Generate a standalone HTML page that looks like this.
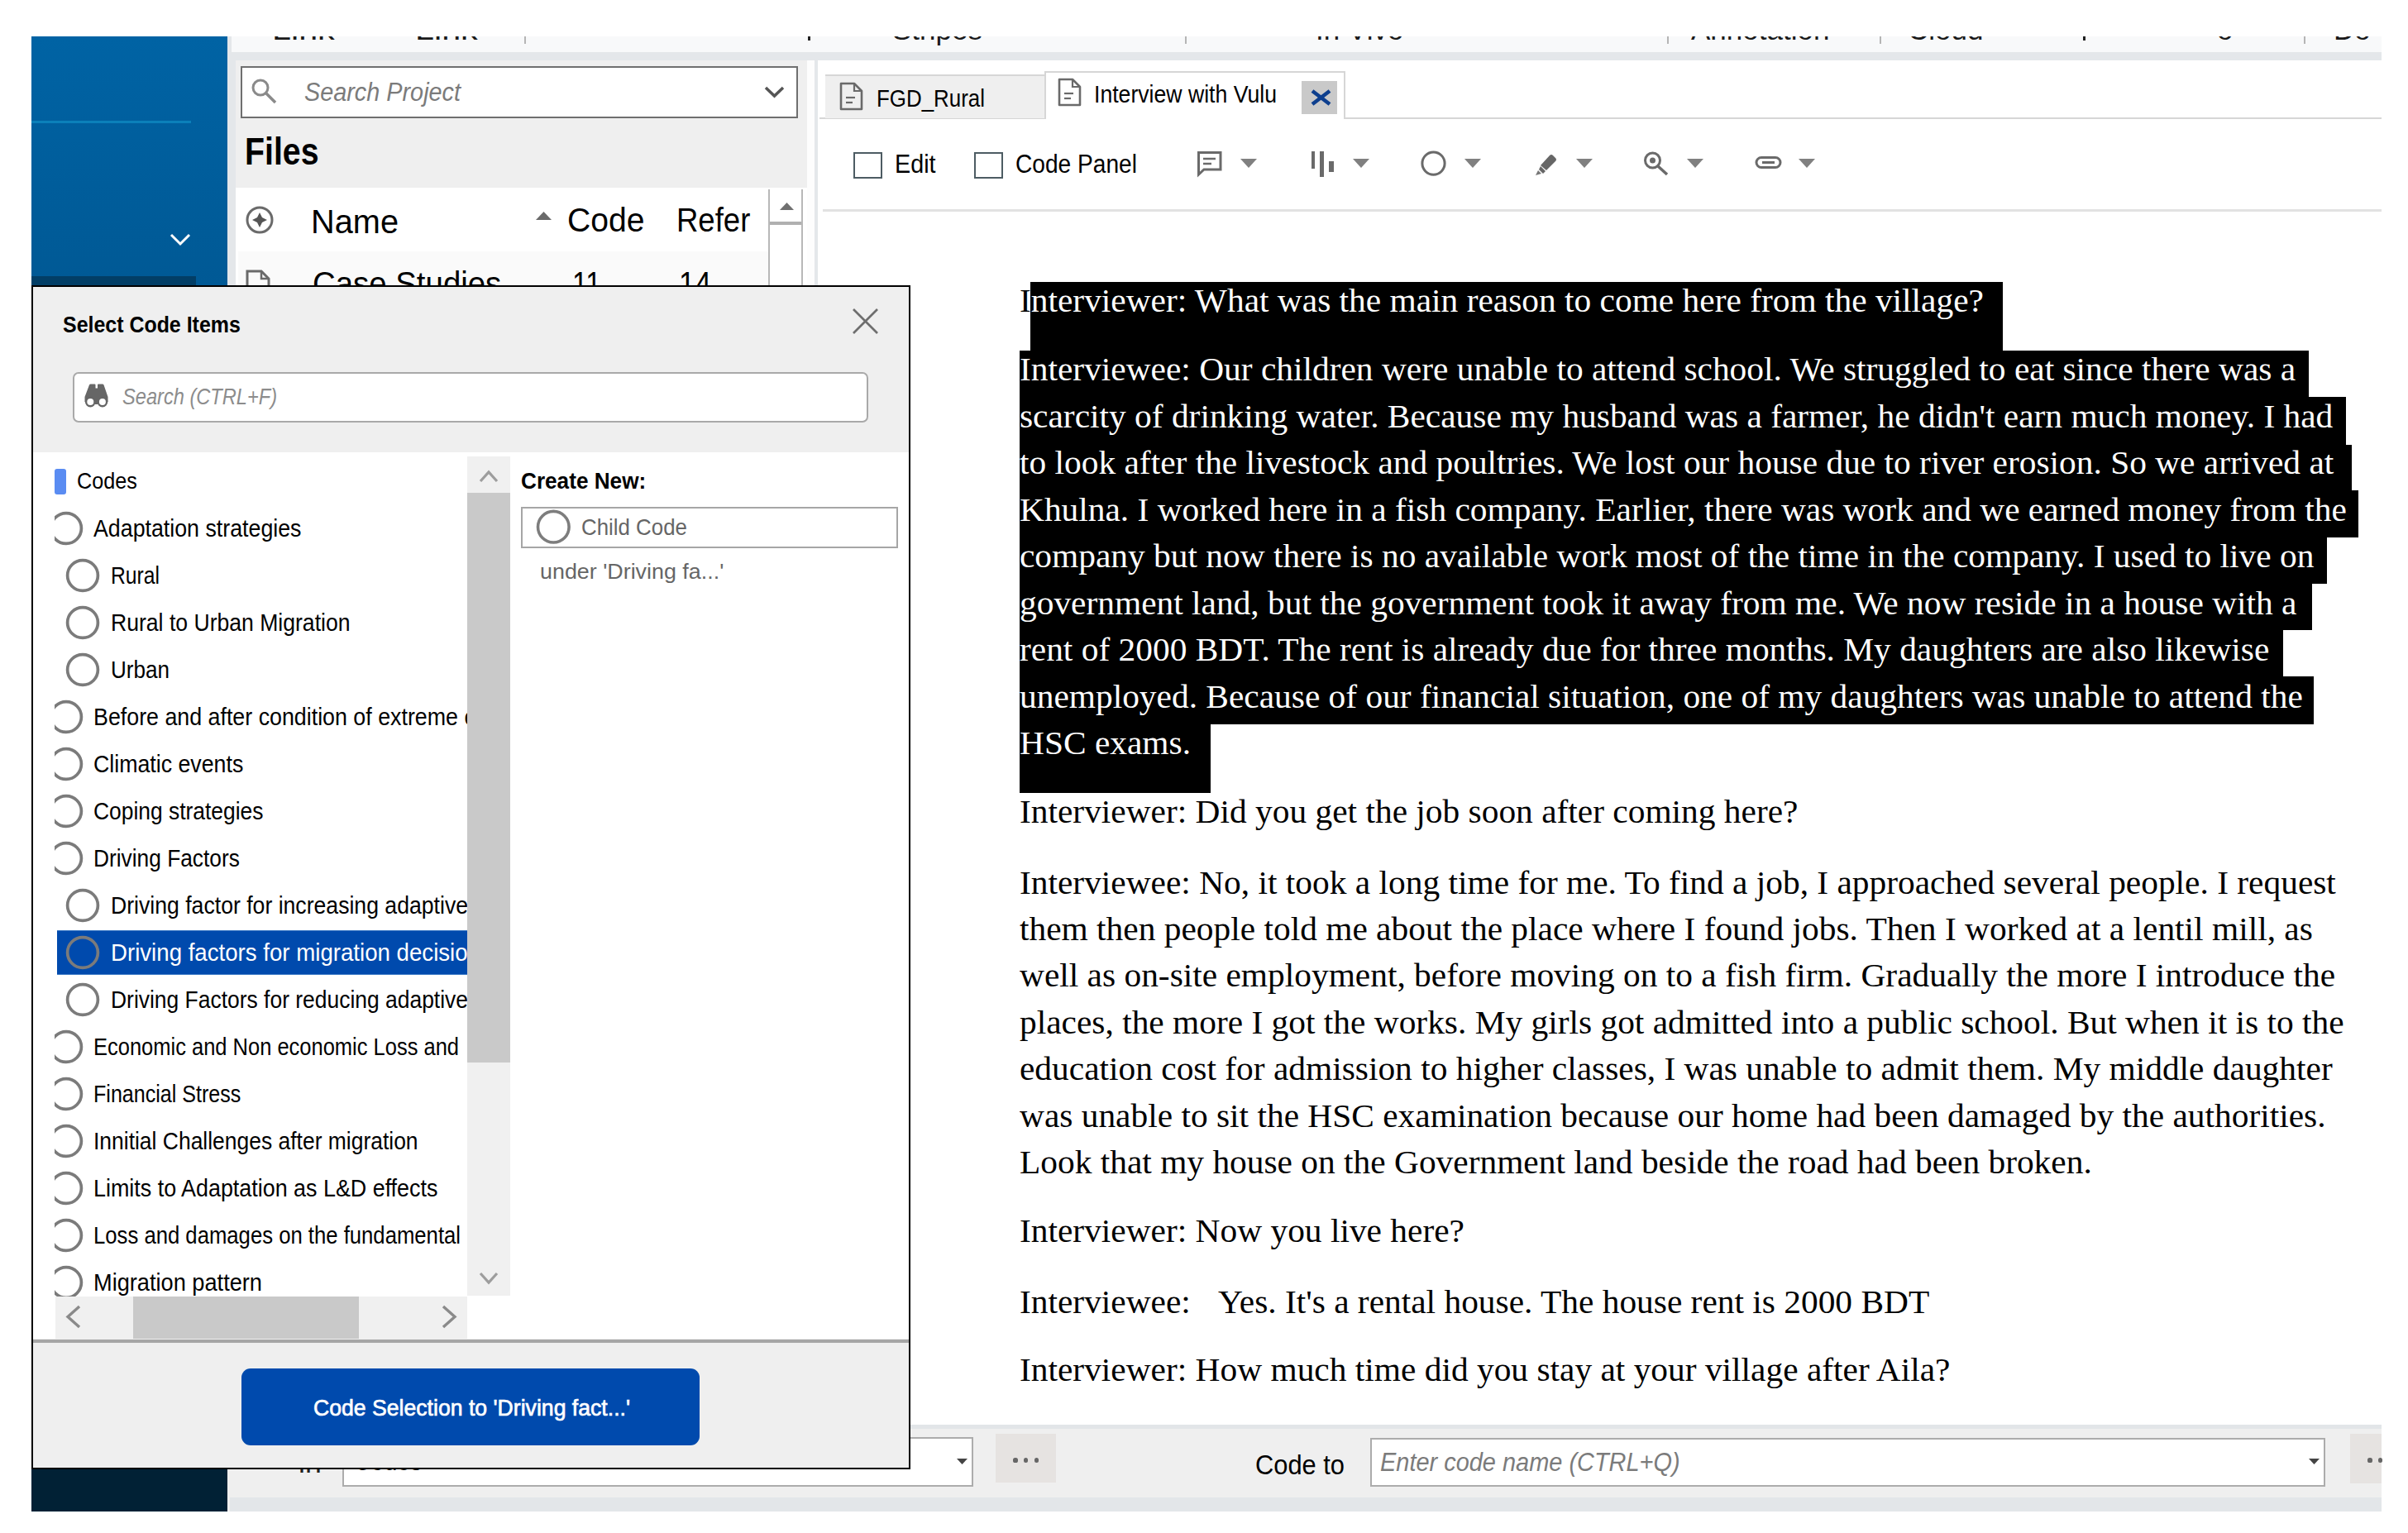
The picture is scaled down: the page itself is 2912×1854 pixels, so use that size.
<!DOCTYPE html>
<html><head><meta charset="utf-8"><style>
html,body{margin:0;padding:0;background:#fff;}
body{width:2912px;height:1854px;position:relative;overflow:hidden;}
.b{position:absolute;}
.t{position:absolute;white-space:pre;transform-origin:0 0;}
</style></head><body>
<div class='b' style='left:38px;top:44px;width:237.00px;height:1784.00px;background:linear-gradient(#0063a4 0px,#005995 300px,#005591 1000px,#012135 1730px)'></div>
<div class='b' style='left:38px;top:146px;width:193.00px;height:2.50px;background:#0b80ba'></div>
<div class='b' style='left:38px;top:334px;width:199.00px;height:11.00px;background:#023e66'></div>
<div class='b' style='left:38px;top:1777px;width:237.00px;height:51.00px;background:#012135'></div>
<svg class='b' style='left:204px;top:280px' width='28' height='20'><polyline points='3,4 14,15 25,4' fill='none' stroke='#fff' stroke-width='3'/></svg>
<div class='b' style='left:275px;top:44px;width:10.00px;height:1784.00px;background:#e4e7ea'></div>
<div class='b' style='left:280px;top:44px;width:2600.00px;height:19.00px;background:#f8f9fa'></div>
<div class='b' style='left:275px;top:63px;width:2605.00px;height:10.00px;background:#e4e7ea'></div>
<div class='b' style='left:285px;top:73px;width:691.00px;height:1650.00px;background:#efefef'></div>
<div class='b' style='left:291px;top:80px;width:674.00px;height:63.00px;background:#fff;border:2px solid #6f6f6f;box-sizing:border-box'></div>
<svg class='b' style='left:300px;top:92px' width='40' height='40'><circle cx='15' cy='14' r='9' fill='none' stroke='#8a8a8a' stroke-width='3'/><line x1='21.5' y1='20.5' x2='33' y2='32' stroke='#8a8a8a' stroke-width='3.5'/></svg>
<div class='t' style='left:367.5px;top:95.24px;font:italic normal 31px "Liberation Sans", sans-serif;line-height:1.1171875em;color:#7b7b7b;transform:scaleX(0.9295);'>Search Project</div>
<svg class='b' style='left:922px;top:100px' width='30' height='24'><polyline points='4,6 14.5,16 25,6' fill='none' stroke='#555' stroke-width='3.5'/></svg>
<div class='t' style='left:296.0px;top:158.06px;font:normal bold 46px "Liberation Sans", sans-serif;line-height:1.1171875em;color:#000;transform:scaleX(0.8538);'>Files</div>
<div class='b' style='left:285px;top:227px;width:691.00px;height:1496.00px;background:#fff'></div>
<div class='b' style='left:288px;top:304px;width:641.00px;height:41.00px;background:#fafafa'></div>
<svg class='b' style='left:295px;top:247px' width='40' height='40'><circle cx='19' cy='19' r='15' fill='none' stroke='#6a6a6a' stroke-width='3'/><path d='M19 10 L22 16 L28 19 L22 22 L19 28 L16 22 L10 19 L16 16 Z' fill='#555'/></svg>
<div class='t' style='left:376.3px;top:246.49px;font:normal normal 40px "Liberation Sans", sans-serif;line-height:1.1171875em;color:#000;transform:scaleX(0.9934);'>Name</div>
<svg class='b' style='left:646px;top:254px' width='24' height='14'><polygon points='2,12 11.5,2 21,12' fill='#6a6a6a'/></svg>
<div class='t' style='left:685.5px;top:244.09px;font:normal normal 40px "Liberation Sans", sans-serif;line-height:1.1171875em;color:#000;transform:scaleX(0.9778);'>Code</div>
<div class='t' style='left:817.7px;top:244.09px;font:normal normal 40px "Liberation Sans", sans-serif;line-height:1.1171875em;color:#000;transform:scaleX(0.9130);'>Refer</div>
<div class='b' style='left:929px;top:229px;width:42.00px;height:116.00px;background:#fff;border-left:2px solid #b8b8b8;border-right:2px solid #b8b8b8;box-sizing:border-box'></div>
<div class='b' style='left:931px;top:268px;width:38.00px;height:4.00px;background:#b0b0b0'></div>
<svg class='b' style='left:941px;top:243px' width='22' height='14'><polygon points='2,11 10.5,2 19,11' fill='#707070'/></svg>
<svg class='b' style='left:296px;top:325px' width='34' height='24'><path d='M3 22 V3 H20 L29 12 V22' fill='none' stroke='#6a6a6a' stroke-width='3'/><path d='M20 3 V12 H29' fill='none' stroke='#6a6a6a' stroke-width='2.5'/></svg>
<div class='t' style='left:377.7px;top:320.79px;font:normal normal 40px "Liberation Sans", sans-serif;line-height:1.1171875em;color:#000;transform:scaleX(0.9596);'>Case Studies</div>
<div class='t' style='left:691.5px;top:320.79px;font:normal normal 40px "Liberation Sans", sans-serif;line-height:1.1171875em;color:#000;transform:scaleX(0.8427);'>11</div>
<div class='t' style='left:821.4px;top:320.79px;font:normal normal 40px "Liberation Sans", sans-serif;line-height:1.1171875em;color:#000;transform:scaleX(0.8764);'>14</div>
<div class='b' style='left:976px;top:73px;width:9.00px;height:1650.00px;background:#fdfdfd'></div>
<div class='b' style='left:984.6px;top:73px;width:4.30px;height:1650.00px;background:#e4e7ea'></div>
<div class='b' style='left:988.9px;top:73px;width:1891.10px;height:1650.00px;background:#fff'></div>
<div class='b' style='left:991px;top:142px;width:1889.00px;height:2.00px;background:#d6d6d6'></div>
<div class='b' style='left:998px;top:90px;width:265.00px;height:53.00px;background:#efefef;border-top:2px solid #d6d6d6;box-sizing:border-box'></div>
<div class='b' style='left:1263px;top:86px;width:364.00px;height:58.00px;background:#fff;border:2px solid #d6d6d6;border-bottom:none;box-sizing:border-box'></div>
<svg class='b' style='left:1014px;top:99px' width='32' height='36'><path d='M3 2 H19 L28 11 V33 H3 Z' fill='none' stroke='#6a6a6a' stroke-width='2.6' stroke-linejoin='round'/><path d='M19 2 V11 H28' fill='none' stroke='#6a6a6a' stroke-width='2.2'/><line x1='9' y1='19' x2='20' y2='19' stroke='#6a6a6a' stroke-width='2.2'/><line x1='9' y1='25' x2='17' y2='25' stroke='#6a6a6a' stroke-width='2.2'/></svg>
<div class='t' style='left:1060.0px;top:101.84px;font:normal normal 30px "Liberation Sans", sans-serif;line-height:1.1171875em;color:#000;transform:scaleX(0.8635);'>FGD_Rural</div>
<svg class='b' style='left:1278px;top:94px' width='32' height='36'><path d='M3 2 H19 L28 11 V33 H3 Z' fill='none' stroke='#6a6a6a' stroke-width='2.6' stroke-linejoin='round'/><path d='M19 2 V11 H28' fill='none' stroke='#6a6a6a' stroke-width='2.2'/><line x1='9' y1='19' x2='20' y2='19' stroke='#6a6a6a' stroke-width='2.2'/><line x1='9' y1='25' x2='17' y2='25' stroke='#6a6a6a' stroke-width='2.2'/></svg>
<div class='t' style='left:1323.0px;top:98.25px;font:normal normal 29px "Liberation Sans", sans-serif;line-height:1.1171875em;color:#000;transform:scaleX(0.9181);'>Interview with Vulu</div>
<div class='b' style='left:1574px;top:98px;width:43.00px;height:40.00px;background:#c9c9c9'></div>
<svg class='b' style='left:1582px;top:106px' width='30' height='24'><line x1='5' y1='4' x2='26' y2='20' stroke='#0d3f8e' stroke-width='4.6'/><line x1='26' y1='4' x2='5' y2='20' stroke='#0d3f8e' stroke-width='4.6'/></svg>
<div class='b' style='left:995px;top:253px;width:1885.00px;height:2.50px;background:#e2e2e2'></div>
<div class='b' style='left:1032px;top:183.5px;width:35.00px;height:32.00px;border:2.5px solid #4d5c63;box-sizing:border-box;background:#fff'></div>
<div class='t' style='left:1082.0px;top:181.64px;font:normal normal 31px "Liberation Sans", sans-serif;line-height:1.1171875em;color:#000;transform:scaleX(0.9266);'>Edit</div>
<div class='b' style='left:1178px;top:183.5px;width:35.00px;height:32.00px;border:2.5px solid #4d5c63;box-sizing:border-box;background:#fff'></div>
<div class='t' style='left:1228.0px;top:181.64px;font:normal normal 31px "Liberation Sans", sans-serif;line-height:1.1171875em;color:#000;transform:scaleX(0.9073);'>Code Panel</div>
<svg class='b' style='left:1500px;top:192px' width='21' height='12'><polygon points='0,0 20,0 10,11' fill='#808080'/></svg>
<svg class='b' style='left:1636px;top:192px' width='21' height='12'><polygon points='0,0 20,0 10,11' fill='#808080'/></svg>
<svg class='b' style='left:1771px;top:192px' width='21' height='12'><polygon points='0,0 20,0 10,11' fill='#808080'/></svg>
<svg class='b' style='left:1906px;top:192px' width='21' height='12'><polygon points='0,0 20,0 10,11' fill='#808080'/></svg>
<svg class='b' style='left:2040px;top:192px' width='21' height='12'><polygon points='0,0 20,0 10,11' fill='#808080'/></svg>
<svg class='b' style='left:2175px;top:192px' width='21' height='12'><polygon points='0,0 20,0 10,11' fill='#808080'/></svg>
<svg class='b' style='left:1446px;top:181px' width='34' height='34'><path d='M3.5 3.5 H30 V24 H10 L3.5 30 Z' fill='none' stroke='#6a6a6a' stroke-width='3' stroke-linejoin='miter'/><line x1='9' y1='11' x2='24' y2='11' stroke='#6a6a6a' stroke-width='2.5'/><line x1='9' y1='17' x2='19' y2='17' stroke='#6a6a6a' stroke-width='2.5'/></svg>
<div class='b' style='left:1585.6px;top:182.7px;width:4.60px;height:21.30px;background:#6a6a6a'></div>
<div class='b' style='left:1596px;top:182.5px;width:4.50px;height:31.00px;background:#6a6a6a'></div>
<div class='b' style='left:1607px;top:195px;width:6.00px;height:12.70px;background:#6a6a6a'></div>
<svg class='b' style='left:1715px;top:180px' width='38' height='36'><circle cx='18.5' cy='17.6' r='13.6' fill='none' stroke='#6a6a6a' stroke-width='3'/></svg>
<svg class='b' style='left:1854px;top:183px' width='32' height='32'><path d='M9 17 L20 5 Q22 3 24 5 L27 8 Q29 10 27 12 L16 23 Z' fill='#666'/><path d='M9 18 L15 24 L12 27 L7 22 Z' fill='#666'/><path d='M6 23 L10 27 L3 29 Z' fill='#777'/></svg>
<svg class='b' style='left:1985px;top:181px' width='36' height='34'><circle cx='13.5' cy='13' r='9' fill='none' stroke='#6a6a6a' stroke-width='3'/><circle cx='13.5' cy='13' r='3.5' fill='#6a6a6a'/><line x1='20' y1='20' x2='31' y2='30' stroke='#6a6a6a' stroke-width='3.5'/></svg>
<svg class='b' style='left:2121px;top:187px' width='36' height='20'><rect x='3' y='3.5' width='29' height='12' rx='6' ry='6' fill='none' stroke='#6a6a6a' stroke-width='3'/><line x1='10' y1='9.5' x2='25' y2='9.5' stroke='#6a6a6a' stroke-width='3'/></svg>
<div class='b' style='left:1246px;top:340.9px;width:1176.30px;height:82.70px;background:#000'></div>
<div class='t' style='left:1233.3px;top:341.34px;font:normal normal 40.8px "Liberation Serif", serif;line-height:1.107421875em;color:#000;transform:scaleX(1.0147);'>I</div>
<div class='t' style='left:1233.3px;top:341.34px;font:normal normal 40.8px "Liberation Serif", serif;line-height:1.107421875em;color:#fff;transform:scaleX(1.0147);clip-path:inset(0 0 0 12.5px);'>Interviewer: What was the main reason to come here from the village?</div>
<div class='b' style='left:1233px;top:424px;width:1559.00px;height:56.00px;background:#000'></div>
<div class='b' style='left:1233px;top:480px;width:1604.00px;height:58.00px;background:#000'></div>
<div class='b' style='left:1233px;top:538px;width:1610.60px;height:55.00px;background:#000'></div>
<div class='b' style='left:1233px;top:593px;width:1619.00px;height:57.00px;background:#000'></div>
<div class='b' style='left:1233px;top:650px;width:1581.30px;height:56.00px;background:#000'></div>
<div class='b' style='left:1233px;top:706px;width:1562.80px;height:56.00px;background:#000'></div>
<div class='b' style='left:1233px;top:762px;width:1527.50px;height:56.00px;background:#000'></div>
<div class='b' style='left:1233px;top:818px;width:1565.00px;height:58.00px;background:#000'></div>
<div class='b' style='left:1233px;top:876px;width:230.80px;height:83.00px;background:#000'></div>
<div class='t' style='left:1233.3px;top:424.24px;font:normal normal 40.8px "Liberation Serif", serif;line-height:1.107421875em;color:#fff;transform:scaleX(1.0147);'>Interviewee: Our children were unable to attend school. We struggled to eat since there was a</div>
<div class='t' style='left:1233.3px;top:480.77px;font:normal normal 40.8px "Liberation Serif", serif;line-height:1.107421875em;color:#fff;transform:scaleX(1.0147);'>scarcity of drinking water. Because my husband was a farmer, he didn&#x27;t earn much money. I had</div>
<div class='t' style='left:1233.3px;top:537.29px;font:normal normal 40.8px "Liberation Serif", serif;line-height:1.107421875em;color:#fff;transform:scaleX(1.0147);'>to look after the livestock and poultries. We lost our house due to river erosion. So we arrived at</div>
<div class='t' style='left:1233.3px;top:593.82px;font:normal normal 40.8px "Liberation Serif", serif;line-height:1.107421875em;color:#fff;transform:scaleX(1.0147);'>Khulna. I worked here in a fish company. Earlier, there was work and we earned money from the</div>
<div class='t' style='left:1233.3px;top:650.34px;font:normal normal 40.8px "Liberation Serif", serif;line-height:1.107421875em;color:#fff;transform:scaleX(1.0147);'>company but now there is no available work most of the time in the company. I used to live on</div>
<div class='t' style='left:1233.3px;top:706.87px;font:normal normal 40.8px "Liberation Serif", serif;line-height:1.107421875em;color:#fff;transform:scaleX(1.0147);'>government land, but the government took it away from me. We now reside in a house with a</div>
<div class='t' style='left:1233.3px;top:763.39px;font:normal normal 40.8px "Liberation Serif", serif;line-height:1.107421875em;color:#fff;transform:scaleX(1.0147);'>rent of 2000 BDT. The rent is already due for three months. My daughters are also likewise</div>
<div class='t' style='left:1233.3px;top:819.92px;font:normal normal 40.8px "Liberation Serif", serif;line-height:1.107421875em;color:#fff;transform:scaleX(1.0147);'>unemployed. Because of our financial situation, one of my daughters was unable to attend the</div>
<div class='t' style='left:1233.3px;top:876.44px;font:normal normal 40.8px "Liberation Serif", serif;line-height:1.107421875em;color:#fff;transform:scaleX(1.0147);'>HSC exams.</div>
<div class='t' style='left:1233.3px;top:959.34px;font:normal normal 40.8px "Liberation Serif", serif;line-height:1.107421875em;color:#000;transform:scaleX(1.0147);'>Interviewer: Did you get the job soon after coming here?</div>
<div class='t' style='left:1233.3px;top:1044.74px;font:normal normal 40.8px "Liberation Serif", serif;line-height:1.107421875em;color:#000;transform:scaleX(1.0147);'>Interviewee: No, it took a long time for me. To find a job, I approached several people. I request</div>
<div class='t' style='left:1233.3px;top:1101.11px;font:normal normal 40.8px "Liberation Serif", serif;line-height:1.107421875em;color:#000;transform:scaleX(1.0147);'>them then people told me about the place where I found jobs. Then I worked at a lentil mill, as</div>
<div class='t' style='left:1233.3px;top:1157.48px;font:normal normal 40.8px "Liberation Serif", serif;line-height:1.107421875em;color:#000;transform:scaleX(1.0147);'>well as on-site employment, before moving on to a fish firm. Gradually the more I introduce the</div>
<div class='t' style='left:1233.3px;top:1213.85px;font:normal normal 40.8px "Liberation Serif", serif;line-height:1.107421875em;color:#000;transform:scaleX(1.0147);'>places, the more I got the works. My girls got admitted into a public school. But when it is to the</div>
<div class='t' style='left:1233.3px;top:1270.22px;font:normal normal 40.8px "Liberation Serif", serif;line-height:1.107421875em;color:#000;transform:scaleX(1.0147);'>education cost for admission to higher classes, I was unable to admit them. My middle daughter</div>
<div class='t' style='left:1233.3px;top:1326.59px;font:normal normal 40.8px "Liberation Serif", serif;line-height:1.107421875em;color:#000;transform:scaleX(1.0147);'>was unable to sit the HSC examination because our home had been damaged by the authorities.</div>
<div class='t' style='left:1233.3px;top:1382.96px;font:normal normal 40.8px "Liberation Serif", serif;line-height:1.107421875em;color:#000;transform:scaleX(1.0147);'>Look that my house on the Government land beside the road had been broken.</div>
<div class='t' style='left:1233.3px;top:1466.14px;font:normal normal 40.8px "Liberation Serif", serif;line-height:1.107421875em;color:#000;transform:scaleX(1.0147);'>Interviewer: Now you live here?</div>
<div class='t' style='left:1233.3px;top:1551.54px;font:normal normal 40.8px "Liberation Serif", serif;line-height:1.107421875em;color:#000;transform:scaleX(1.0147);'>Interviewee:</div>
<div class='t' style='left:1473.4px;top:1551.54px;font:normal normal 40.8px "Liberation Serif", serif;line-height:1.107421875em;color:#000;transform:scaleX(1.0147);'>Yes. It&#x27;s a rental house. The house rent is 2000 BDT</div>
<div class='t' style='left:1233.3px;top:1634.24px;font:normal normal 40.8px "Liberation Serif", serif;line-height:1.107421875em;color:#000;transform:scaleX(1.0147);'>Interviewer: How much time did you stay at your village after Aila?</div>
<div class='b' style='left:275px;top:1723px;width:2605.00px;height:105.00px;background:#efefef'></div>
<div class='b' style='left:275px;top:1723px;width:2605.00px;height:4.50px;background:#e2e5e8'></div>
<div class='b' style='left:278px;top:1810.6px;width:2602.00px;height:17.40px;background:#e3e6e9'></div>
<div class='b' style='left:414px;top:1738.3px;width:763.00px;height:59.70px;background:#fff;border:2px solid #acacac;box-sizing:border-box'></div>
<svg class='b' style='left:1157px;top:1764px' width='14' height='9'><polygon points='0,0 13,0 6.5,7' fill='#444'/></svg>
<div class='b' style='left:1204px;top:1734px;width:73.00px;height:59.40px;background:#e6e3e1'></div>
<div class='b' style='left:1225.4px;top:1763.4px;width:5.2px;height:5.2px;border-radius:50%;background:#666'></div>
<div class='b' style='left:1238.1000000000001px;top:1763.4px;width:5.2px;height:5.2px;border-radius:50%;background:#666'></div>
<div class='b' style='left:1251.0px;top:1763.4px;width:5.2px;height:5.2px;border-radius:50%;background:#666'></div>
<div class='t' style='left:1518.0px;top:1753.83px;font:normal normal 33px "Liberation Sans", sans-serif;line-height:1.1171875em;color:#000;transform:scaleX(0.9343);'>Code to</div>
<div class='b' style='left:1657px;top:1739px;width:1155.00px;height:59.00px;background:#fff;border:2px solid #acacac;box-sizing:border-box'></div>
<div class='t' style='left:1669.4px;top:1751.54px;font:italic normal 31px "Liberation Sans", sans-serif;line-height:1.1171875em;color:#7b7b7b;transform:scaleX(0.9333);'>Enter code name (CTRL+Q)</div>
<svg class='b' style='left:2792px;top:1764px' width='14' height='9'><polygon points='0,0 13,0 6.5,7' fill='#444'/></svg>
<div class='b' style='left:2842px;top:1734px;width:38.00px;height:60.00px;background:#e6e3e1'></div>
<div class='b' style='left:2863.4px;top:1763.4px;width:5.2px;height:5.2px;border-radius:50%;background:#666'></div>
<div class='b' style='left:2876.1px;top:1763.4px;width:5.2px;height:5.2px;border-radius:50%;background:#666'></div>
<div class='b' style='left:280px;top:44px;width:2600px;height:19px;overflow:hidden'>
<div class='t' style='left:49px;top:-27.6px;font:normal 35px "Liberation Sans",sans-serif;line-height:1.1172em;color:#1a1a1a;transform:scaleX(1.18)'>Link</div>
<div class='t' style='left:222px;top:-27.6px;font:normal 35px "Liberation Sans",sans-serif;line-height:1.1172em;color:#1a1a1a;transform:scaleX(1.18)'>Link</div>
<div class='b' style='left:354px;top:0px;width:2px;height:9px;background:#b5b5b5'></div>
<div class='b' style='left:697px;top:0px;width:3px;height:5px;background:#222'></div>
<div class='t' style='left:799px;top:-27.6px;font:normal 35px "Liberation Sans",sans-serif;line-height:1.1172em;color:#1a1a1a;transform:scaleX(1.0)'>Stripes</div>
<div class='b' style='left:1153px;top:0px;width:2px;height:9px;background:#b5b5b5'></div>
<div class='t' style='left:1311px;top:-27.6px;font:normal 35px "Liberation Sans",sans-serif;line-height:1.1172em;color:#1a1a1a;transform:scaleX(1.0)'>In Vivo</div>
<div class='b' style='left:1736px;top:0px;width:2px;height:9px;background:#b5b5b5'></div>
<div class='t' style='left:1765px;top:-27.6px;font:normal 35px "Liberation Sans",sans-serif;line-height:1.1172em;color:#1a1a1a;transform:scaleX(1.0)'>Annotation</div>
<div class='b' style='left:1993px;top:0px;width:2px;height:9px;background:#b5b5b5'></div>
<div class='t' style='left:2027px;top:-27.6px;font:normal 35px "Liberation Sans",sans-serif;line-height:1.1172em;color:#1a1a1a;transform:scaleX(1.0)'>Cloud</div>
<div class='b' style='left:2239px;top:0px;width:3px;height:5px;background:#222'></div>
<div class='t' style='left:2401px;top:-27.6px;font:normal 35px "Liberation Sans",sans-serif;line-height:1.1172em;color:#1a1a1a;transform:scaleX(1.0)'>o</div>
<div class='b' style='left:2506px;top:0px;width:2px;height:9px;background:#b5b5b5'></div>
<div class='t' style='left:2542px;top:-27.6px;font:normal 35px "Liberation Sans",sans-serif;line-height:1.1172em;color:#1a1a1a;transform:scaleX(1.0)'>Do</div>
</div>
<div class='b' style='left:340px;top:1777px;width:240px;height:8px;overflow:hidden'>
<div class='t' style='left:21px;top:-23px;font:normal 31px "Liberation Sans",sans-serif;line-height:1.1172em;color:#222;transform:scaleX(1.15)'>in</div>
<div class='t' style='left:88px;top:-26.5px;font:normal 31px "Liberation Sans",sans-serif;line-height:1.1172em;color:#111;transform:scaleX(0.92)'>Codes</div>
</div>
<div class='b' style='left:38px;top:345px;width:1063.00px;height:1432.00px;background:#efefef;border:2.4px solid #000;box-sizing:border-box'></div>
<div class='t' style='left:75.6px;top:377.90px;font:normal bold 27.5px "Liberation Sans", sans-serif;line-height:1.1171875em;color:#000;transform:scaleX(0.9067);'>Select Code Items</div>
<svg class='b' style='left:1029px;top:371px' width='35' height='35'><line x1='3' y1='3' x2='32' y2='32' stroke='#6e6e6e' stroke-width='2.6'/><line x1='32' y1='3' x2='3' y2='32' stroke='#6e6e6e' stroke-width='2.6'/></svg>
<div class='b' style='left:87.8px;top:449.5px;width:962.20px;height:61.00px;background:#fff;border:2px solid #a9a9a9;border-radius:7px;box-sizing:border-box'></div>
<svg class='b' style='left:100px;top:463px' width='34' height='32'><path d='M8 2.5 Q8.5 1.5 9.5 1.5 H14.5 Q15.5 1.5 15.5 2.5 V6.5 H18 V2.5 Q18 1.5 19 1.5 H24 Q25 1.5 25.5 2.5 L30.5 17 V23 H2.5 V17 Z' fill='#666'/><circle cx='9.3' cy='23' r='5.2' fill='#fff' stroke='#666' stroke-width='2.4'/><circle cx='23.9' cy='23' r='5.2' fill='#fff' stroke='#666' stroke-width='2.4'/><rect x='15' y='20' width='3.5' height='6' fill='#666'/></svg>
<div class='t' style='left:148.0px;top:464.15px;font:italic normal 28px "Liberation Sans", sans-serif;line-height:1.1171875em;color:#8c8c8c;transform:scaleX(0.8434);'>Search (CTRL+F)</div>
<div class='b' style='left:40.4px;top:546.8px;width:1058.20px;height:1072.70px;background:#fff'></div>
<div class='b' style='left:66px;top:567px;width:14.00px;height:31.00px;background:#5a8cf2;border-radius:3px'></div>
<div class='t' style='left:92.8px;top:566.45px;font:normal normal 28px "Liberation Sans", sans-serif;line-height:1.1171875em;color:#000;transform:scaleX(0.8995);'>Codes</div>
<div class='b' style='left:66px;top:552px;width:499px;height:1016px;overflow:hidden'><svg class='b' style='left:-8px;top:64.79999999999995px' width='44' height='44'><circle cx='22' cy='22' r='18.4' fill='none' stroke='#7b7b7b' stroke-width='3.7'/></svg>
<div class='t' style='left:47.0px;top:71.91px;font:normal normal 28.6px "Liberation Sans", sans-serif;line-height:1.1171875em;color:#000;transform:scaleX(0.9362);'>Adaptation strategies</div>
<svg class='b' style='left:12.299999999999997px;top:121.79999999999995px' width='44' height='44'><circle cx='22' cy='22' r='18.4' fill='none' stroke='#7b7b7b' stroke-width='3.7'/></svg>
<div class='t' style='left:68.0px;top:128.91px;font:normal normal 28.6px "Liberation Sans", sans-serif;line-height:1.1171875em;color:#000;transform:scaleX(0.8633);'>Rural</div>
<svg class='b' style='left:12.299999999999997px;top:178.79999999999995px' width='44' height='44'><circle cx='22' cy='22' r='18.4' fill='none' stroke='#7b7b7b' stroke-width='3.7'/></svg>
<div class='t' style='left:68.0px;top:185.91px;font:normal normal 28.6px "Liberation Sans", sans-serif;line-height:1.1171875em;color:#000;transform:scaleX(0.9294);'>Rural to Urban Migration</div>
<svg class='b' style='left:12.299999999999997px;top:235.79999999999995px' width='44' height='44'><circle cx='22' cy='22' r='18.4' fill='none' stroke='#7b7b7b' stroke-width='3.7'/></svg>
<div class='t' style='left:68.0px;top:242.91px;font:normal normal 28.6px "Liberation Sans", sans-serif;line-height:1.1171875em;color:#000;transform:scaleX(0.9115);'>Urban</div>
<svg class='b' style='left:-8px;top:292.79999999999995px' width='44' height='44'><circle cx='22' cy='22' r='18.4' fill='none' stroke='#7b7b7b' stroke-width='3.7'/></svg>
<div class='t' style='left:47.0px;top:299.91px;font:normal normal 28.6px "Liberation Sans", sans-serif;line-height:1.1171875em;color:#000;transform:scaleX(0.9373);'>Before and after condition of extreme events</div>
<svg class='b' style='left:-8px;top:349.79999999999995px' width='44' height='44'><circle cx='22' cy='22' r='18.4' fill='none' stroke='#7b7b7b' stroke-width='3.7'/></svg>
<div class='t' style='left:47.0px;top:356.91px;font:normal normal 28.6px "Liberation Sans", sans-serif;line-height:1.1171875em;color:#000;transform:scaleX(0.9351);'>Climatic events</div>
<svg class='b' style='left:-8px;top:406.79999999999995px' width='44' height='44'><circle cx='22' cy='22' r='18.4' fill='none' stroke='#7b7b7b' stroke-width='3.7'/></svg>
<div class='t' style='left:47.0px;top:413.91px;font:normal normal 28.6px "Liberation Sans", sans-serif;line-height:1.1171875em;color:#000;transform:scaleX(0.9235);'>Coping strategies</div>
<svg class='b' style='left:-8px;top:463.79999999999995px' width='44' height='44'><circle cx='22' cy='22' r='18.4' fill='none' stroke='#7b7b7b' stroke-width='3.7'/></svg>
<div class='t' style='left:47.0px;top:470.91px;font:normal normal 28.6px "Liberation Sans", sans-serif;line-height:1.1171875em;color:#000;transform:scaleX(0.9196);'>Driving Factors</div>
<svg class='b' style='left:12.299999999999997px;top:520.8px' width='44' height='44'><circle cx='22' cy='22' r='18.4' fill='none' stroke='#7b7b7b' stroke-width='3.7'/></svg>
<div class='t' style='left:68.0px;top:527.91px;font:normal normal 28.6px "Liberation Sans", sans-serif;line-height:1.1171875em;color:#000;transform:scaleX(0.9309);'>Driving factor for increasing adaptive capacity</div>
<div class='b' style='left:3.299999999999997px;top:573.2px;width:495.7px;height:53.59999999999991px;background:#004aad;border-top:1.5px solid #3a78c4;border-bottom:1.5px solid #3a78c4;box-sizing:border-box'></div>
<svg class='b' style='left:12.299999999999997px;top:577.8px' width='44' height='44'><circle cx='22' cy='22' r='18.4' fill='none' stroke='#7b7b7b' stroke-width='3.7'/></svg>
<div class='t' style='left:68.0px;top:584.91px;font:normal normal 28.6px "Liberation Sans", sans-serif;line-height:1.1171875em;color:#fff;transform:scaleX(0.9666);'>Driving factors for migration decision</div>
<svg class='b' style='left:12.299999999999997px;top:634.8px' width='44' height='44'><circle cx='22' cy='22' r='18.4' fill='none' stroke='#7b7b7b' stroke-width='3.7'/></svg>
<div class='t' style='left:68.0px;top:641.91px;font:normal normal 28.6px "Liberation Sans", sans-serif;line-height:1.1171875em;color:#000;transform:scaleX(0.9246);'>Driving Factors for reducing adaptive capacity</div>
<svg class='b' style='left:-8px;top:691.8px' width='44' height='44'><circle cx='22' cy='22' r='18.4' fill='none' stroke='#7b7b7b' stroke-width='3.7'/></svg>
<div class='t' style='left:47.0px;top:698.91px;font:normal normal 28.6px "Liberation Sans", sans-serif;line-height:1.1171875em;color:#000;transform:scaleX(0.8913);'>Economic and Non economic Loss and</div>
<svg class='b' style='left:-8px;top:748.8px' width='44' height='44'><circle cx='22' cy='22' r='18.4' fill='none' stroke='#7b7b7b' stroke-width='3.7'/></svg>
<div class='t' style='left:47.0px;top:755.91px;font:normal normal 28.6px "Liberation Sans", sans-serif;line-height:1.1171875em;color:#000;transform:scaleX(0.8765);'>Financial Stress</div>
<svg class='b' style='left:-8px;top:805.8px' width='44' height='44'><circle cx='22' cy='22' r='18.4' fill='none' stroke='#7b7b7b' stroke-width='3.7'/></svg>
<div class='t' style='left:47.0px;top:812.91px;font:normal normal 28.6px "Liberation Sans", sans-serif;line-height:1.1171875em;color:#000;transform:scaleX(0.9251);'>Innitial Challenges after migration</div>
<svg class='b' style='left:-8px;top:862.8px' width='44' height='44'><circle cx='22' cy='22' r='18.4' fill='none' stroke='#7b7b7b' stroke-width='3.7'/></svg>
<div class='t' style='left:47.0px;top:869.91px;font:normal normal 28.6px "Liberation Sans", sans-serif;line-height:1.1171875em;color:#000;transform:scaleX(0.9401);'>Limits to Adaptation as L&amp;D effects</div>
<svg class='b' style='left:-8px;top:919.8px' width='44' height='44'><circle cx='22' cy='22' r='18.4' fill='none' stroke='#7b7b7b' stroke-width='3.7'/></svg>
<div class='t' style='left:47.0px;top:926.91px;font:normal normal 28.6px "Liberation Sans", sans-serif;line-height:1.1171875em;color:#000;transform:scaleX(0.8981);'>Loss and damages on the fundamental rights</div>
<svg class='b' style='left:-8px;top:976.8px' width='44' height='44'><circle cx='22' cy='22' r='18.4' fill='none' stroke='#7b7b7b' stroke-width='3.7'/></svg>
<div class='t' style='left:47.0px;top:983.91px;font:normal normal 28.6px "Liberation Sans", sans-serif;line-height:1.1171875em;color:#000;transform:scaleX(0.9507);'>Migration pattern</div></div>
<div class='b' style='left:565px;top:552px;width:52.00px;height:1015.40px;background:#f0f0f0'></div>
<div class='b' style='left:565px;top:595.7px;width:52.00px;height:688.90px;background:#c9c9c9'></div>
<svg class='b' style='left:578px;top:566px' width='26' height='20'><polyline points='3,16 13,5 23,16' fill='none' stroke='#9d9d9d' stroke-width='3.2'/></svg>
<svg class='b' style='left:578px;top:1536px' width='26' height='20'><polyline points='3,4 13,15 23,4' fill='none' stroke='#9d9d9d' stroke-width='3.2'/></svg>
<div class='b' style='left:66.7px;top:1568px;width:498.30px;height:51.00px;background:#f0f0f0'></div>
<div class='b' style='left:161px;top:1568px;width:273.20px;height:51.00px;background:#c9c9c9'></div>
<svg class='b' style='left:76px;top:1577px' width='26' height='31'><polyline points='20,3 6,15.5 20,28' fill='none' stroke='#8a8a8a' stroke-width='3.4'/></svg>
<svg class='b' style='left:530px;top:1577px' width='26' height='31'><polyline points='6,3 20,15.5 6,28' fill='none' stroke='#8a8a8a' stroke-width='3.4'/></svg>
<div class='t' style='left:630.4px;top:566.90px;font:normal bold 27.5px "Liberation Sans", sans-serif;line-height:1.1171875em;color:#000;transform:scaleX(0.9512);'>Create New:</div>
<div class='b' style='left:629.7px;top:612.8px;width:456.10px;height:50.70px;background:#fff;border:2px solid #a6a6a6;box-sizing:border-box'></div>
<svg class='b' style='left:647px;top:615px' width='45' height='45'><circle cx='22.3' cy='22.2' r='18.8' fill='none' stroke='#7d7d7d' stroke-width='3.6'/></svg>
<div class='t' style='left:702.8px;top:622.15px;font:normal normal 28px "Liberation Sans", sans-serif;line-height:1.1171875em;color:#666;transform:scaleX(0.9233);'>Child Code</div>
<div class='t' style='left:652.5px;top:677.26px;font:normal normal 26px "Liberation Sans", sans-serif;line-height:1.1171875em;color:#666;transform:scaleX(1.0333);'>under &#x27;Driving fa...&#x27;</div>
<div class='b' style='left:40.4px;top:1619.5px;width:1058.20px;height:4.20px;background:#a6a6a6'></div>
<div class='b' style='left:292px;top:1655px;width:554.00px;height:93.30px;background:#004aad;border-radius:11px'></div>
<div class='t' style='left:379.0px;top:1686.70px;font:normal normal 28.5px "Liberation Sans", sans-serif;line-height:1.1171875em;color:#fff;transform:scaleX(0.9340);-webkit-text-stroke:0.7px #fff;'>Code Selection to &#x27;Driving fact...&#x27;</div>
</body></html>
